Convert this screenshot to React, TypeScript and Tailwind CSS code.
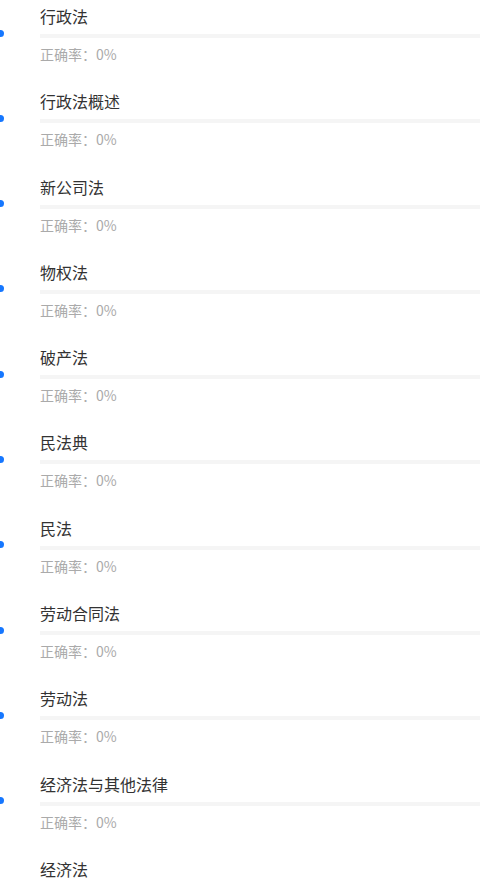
const subjects = [
  "行政法",
  "行政法概述",
  "新公司法",
  "物权法",
  "破产法",
  "民法典",
  "民法",
  "劳动合同法",
  "劳动法",
  "经济法与其他法律",
  "经济法",
];

function SubjectItem({ name }: { name: string }) {
  return (
    <div className="relative h-[85.3px] pl-10">
      <span className="absolute left-[-3.5px] top-[25.5px] h-[7px] w-[7px] rounded-full bg-[#1677ff]" />
      <div className="text-[16px] leading-6 text-[#333]">{name}</div>
      <div className="mt-[6px] h-1 w-full bg-[#f5f5f5]" />
      <div className="mt-[6px] text-[14px] leading-5 text-[#aaa]">正确率：0%</div>
    </div>
  );
}

export default function App() {
  return (
    <div
      className="h-[880px] w-[480px] overflow-hidden bg-white pt-1"
      style={{ fontFamily: '"Noto Sans CJK SC", "Noto Sans", sans-serif' }}
    >
      {subjects.map((s) => (
        <SubjectItem key={s} name={s} />
      ))}
    </div>
  );
}
